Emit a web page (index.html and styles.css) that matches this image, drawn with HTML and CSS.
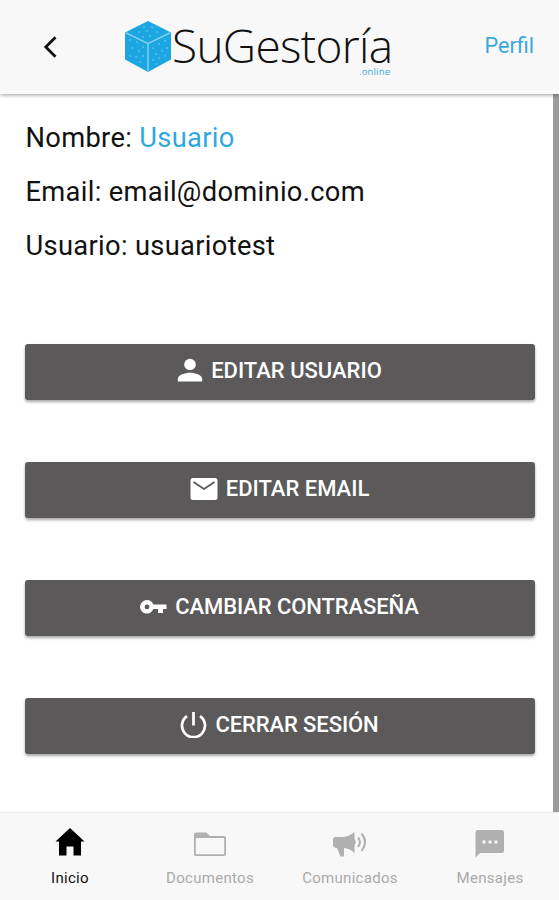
FILE: index.html
```html
<!DOCTYPE html>
<html lang="es">
<head>
<meta charset="utf-8">
<title>SuGestoría - Perfil</title>
<link rel="stylesheet" href="styles.css">
</head>
<body>
<div class="app">
  <header class="header">
    <a class="back" aria-label="Volver"><svg width="14" height="22" viewBox="0 0 14 22"><path d="M12.500 1.200 2.800 11 12.500 20.800" fill="none" stroke="#111" stroke-width="2.800"/></svg></a>
    <svg class="logo" width="270" height="60" viewBox="0 0 270 60">
      <path d="M23 1 46 12.500V39.500L23 52 0 39.500V12.500Z" fill="#1ca7e2"/>
      <path d="M1 12.800 23 23.500 45 12.800M23 23.500V51" fill="none" stroke="#8fd5f3" stroke-width="1.300"/>
      <path d="M19 7h.1M27 7h.1M14 12h.1M22 11h.1M32 12h.1M25 16h.1M18 17h.1M5 20h.1M12 22h.1M18 27h.1M7 28h.1M14 31h.1M5 36h.1M11 37h.1M18 36h.1M15 42h.1M28 28h.1M34 24h.1M40 21h.1M31 34h.1M37 31h.1M42 28h.1M28 40h.1M34 38h.1M40 36h.1M31 44h.1" fill="none" stroke="#7fd0f2" stroke-width="1.500" stroke-linecap="round"/>
      <text class="logo-name" x="47" y="43" textLength="221">SuGestoría</text>
      <text class="logo-sub" x="234" y="55" textLength="31">.online</text>
    </svg>
    <a class="perfil">Perfil</a>
  </header>
  <main class="content">
    <p class="line">Nombre: <span class="user">Usuario</span></p>
    <p class="line">Email: email@dominio.com</p>
    <p class="line">Usuario: usuariotest</p>
    <div class="actions">
      <button class="btn"><svg width="26" height="26" viewBox="0 0 26 26"><circle cx="13" cy="7.500" r="5.800"/><path d="M.8 24.500V22C.8 18 8 15.800 13 15.800S25.200 18 25.200 22V24.500Z"/></svg><span>EDITAR USUARIO</span></button>
      <button class="btn"><svg width="28" height="26" viewBox="0 0 28 26"><rect x=".5" y="3" width="27" height="22" rx="2.500"/><path d="M3.500 7 14 14 24.500 7" fill="none" stroke="#5b595a" stroke-width="1.800"/></svg><span>EDITAR EMAIL</span></button>
      <button class="btn narrow"><svg width="27" height="26" viewBox="0 0 27 26"><path fill-rule="evenodd" d="M7 7a6.800 6.800 0 1 0 6.300 9H18v4h5v-4h3.500v-4.500H13.300A6.800 6.800 0 0 0 7 7Zm0 4.500a2.400 2.400 0 1 1 0 4.800 2.400 2.400 0 0 1 0-4.800Z"/></svg><span>CAMBIAR CONTRASEÑA</span></button>
      <button class="btn narrow"><svg width="27" height="28" viewBox="0 0 27 28"><path d="M13.500 2V15.500M7 6.200a11.500 11.500 0 1 0 13 0" fill="none" stroke="#fff" stroke-width="2.700"/></svg><span>CERRAR SESIÓN</span></button>
    </div>
  </main>
  <nav class="tabs">
    <a class="tab active"><svg width="34" height="30" viewBox="0 0 34 30"><path d="M17 0 31.500 13.500H28V27.500H20.500V18.500H13.500V27.500H6V13.500H2.500Z"/></svg><span>Inicio</span></a>
    <a class="tab"><svg width="34" height="30" viewBox="0 0 34 30"><path d="M1 10V6.500a2 2 0 0 1 2-2H13.500L17 8H31a2 2 0 0 1 2 2V26a2 2 0 0 1-2 2H3a2 2 0 0 1-2-2Z"/><rect class="hole" x="2.800" y="10" width="28.400" height="16.200" rx=".8"/></svg><span>Documentos</span></a>
    <a class="tab"><svg width="34" height="30" viewBox="0 0 34 30"><path d="M0 11.500Q0 9 2.500 9H9Q16 9 21.500 4V11Q24 14 21.500 17V25Q17 20.500 11 20V28.500H7.500L4 20Q0 19.500 0 17Z"/><path d="M25 9.500Q29 14 25 19M28.500 5.500Q35.500 14 28.500 23" fill="none" stroke="#b0b0b0" stroke-width="2"/></svg><span>Comunicados</span></a>
    <a class="tab"><svg width="34" height="30" viewBox="0 0 34 30"><path d="M2.500 29.500V4.500a2.500 2.500 0 0 1 2.500-2.500H28.500a2.500 2.500 0 0 1 2.500 2.500V22.500a2.500 2.500 0 0 1-2.500 2.500H7Z"/><path class="hole" d="M9.500 12.500h3v3h-3ZM15.500 12.500h3v3h-3ZM21.500 12.500h3v3h-3Z"/></svg><span>Mensajes</span></a>
  </nav>
</div>
</body>
</html>
```
FILE: styles.css
```css
* { box-sizing: border-box; }
body { margin: 0; background: #fff; font-family: Roboto, "Liberation Sans", sans-serif; color: #111; }
.app { width: 559px; height: 900px; display: flex; flex-direction: column; overflow: hidden; }
.header {
  height: 94px; flex: none; display: flex; align-items: flex-start; background: #f8f8f8;
  box-shadow: 0 1px 4px rgba(0, 0, 0, .38); z-index: 1;
}
.back { margin: 36px 0 0 43px; width: 14px; height: 22px; }
.logo { margin: 20px 0 0 68px; flex: none; overflow: visible; }
.logo-name { font: 300 46px "Open Sans", sans-serif; fill: #111; }
.logo-sub { font: 400 9.500px "Open Sans", sans-serif; fill: #3dabdc; }
.perfil { margin: 32px 25px 0 auto; font-size: 21.600px; line-height: 28px; color: #3aa9dc; }
.content { flex: 1; padding: 17px 18px 0 25px; border-right: 6px solid #9c9c9c; }
.line { margin: 0; padding-left: .5px; height: 54px; line-height: 55px; font-size: 27.300px; letter-spacing: .32px; white-space: nowrap; }
.user { color: #2fa8df; }
.actions { display: flex; flex-direction: column; gap: 62px; margin-top: 70.500px; width: 510px; }
.btn {
  height: 56px; border: 0; border-radius: 3px; padding: 0 1px 0 0; background: #5b595a; color: #fff;
  display: flex; align-items: center; justify-content: center; gap: 8px;
  font: 500 22px/28px Roboto, sans-serif; box-shadow: 0 2px 3px rgba(0, 0, 0, .35);
}
.btn svg { fill: #fff; flex: none; margin-top: -3px; }
.btn span { margin-top: -1px; }
.narrow { letter-spacing: -.1px; }
.tabs { height: 88px; flex: none; background: #f8f8f8; border-top: 1px solid #ededed; display: grid; grid-template-columns: repeat(4, 140px); }
.tab { display: flex; flex-direction: column; align-items: center; padding-top: 15px; color: #aaa; fill: #b0b0b0; font-size: 15px; line-height: 20px; gap: 10px; letter-spacing: .3px; }
.tab.active { color: #111; fill: #000; }
.hole { fill: #f8f8f8; }
```
